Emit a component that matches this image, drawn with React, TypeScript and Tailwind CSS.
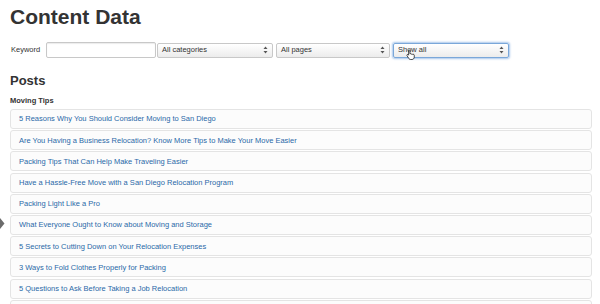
import React from 'react';

const posts = [
  '5 Reasons Why You Should Consider Moving to San Diego',
  'Are You Having a Business Relocation? Know More Tips to Make Your Move Easier',
  'Packing Tips That Can Help Make Traveling Easier',
  'Have a Hassle-Free Move with a San Diego Relocation Program',
  'Packing Light Like a Pro',
  'What Everyone Ought to Know about Moving and Storage',
  '5 Secrets to Cutting Down on Your Relocation Expenses',
  '3 Ways to Fold Clothes Properly for Packing',
  '5 Questions to Ask Before Taking a Job Relocation',
  '',
];

const Arrows = () => (
  <svg width="5" height="8" viewBox="0 0 5 8" className="shrink-0">
    <path d="M2.5 0.5 L4.5 3 L0.5 3 Z" fill="#555" />
    <path d="M2.5 7.5 L4.5 5 L0.5 5 Z" fill="#555" />
  </svg>
);

const FakeSelect = ({ label, width, focused }: { label: string; width: string; focused?: boolean }) => (
  <div
    className={`${width} h-[15px] flex items-center justify-between pl-[4px] pr-[4px] rounded-[2px] border bg-gradient-to-b from-white to-[#ececec] text-[#333] text-[7.5px] ${focused ? 'border-[#7aa7d9] shadow-[0_0_2px_1px_rgba(110,160,220,0.6)]' : 'border-[#c8c8c8]'}`}
  >
    <span>{label}</span>
    <Arrows />
  </div>
);

export default function App() {
  return (
    <div className="relative w-[600px] h-[304px] overflow-hidden bg-white px-[10px] pt-[6px]" style={{ fontFamily: '"Liberation Sans", Arial, Helvetica, sans-serif' }}>
      <h1 className="text-[21px] leading-[21px] font-bold text-[#333]">Content Data</h1>

      <div className="flex items-center mt-[15px] h-[16px]">
        <span className="text-[7.5px] text-[#333] ml-[1px] w-[35px]">Keyword</span>
        <div className="w-[110px] h-[16px] bg-white border border-[#c8c8c8] rounded-[2px] shadow-[inset_0_1px_1px_rgba(0,0,0,0.08)]" />
        <div className="ml-[1px] flex gap-[3px] items-center">
          <FakeSelect label="All categories" width="w-[116px]" />
          <FakeSelect label="All pages" width="w-[114px]" />
          <div className="relative">
            <FakeSelect label="Show all" width="w-[116px]" focused />
            <svg width="9" height="11" viewBox="0 0 18 22" className="absolute left-[13px] top-[6px]">
              <path d="M6 1.5c1 0 1.8.8 1.8 1.8v6.2l1-.2c.9 0 1.5.5 1.7 1.2.3-.4.8-.6 1.4-.6.8 0 1.4.5 1.6 1.2.3-.3.7-.5 1.2-.5 1 0 1.8.8 1.8 1.8v4c0 2.5-2 4.6-4.6 4.6H9.3c-1.4 0-2.7-.7-3.5-1.8L2 13.3c-.5-.7-.3-1.6.4-2.1.6-.4 1.4-.3 1.9.2l.9 1V3.3C5.2 2.3 5.6 1.5 6 1.5z" fill="#fff" stroke="#000" strokeWidth="1.4" strokeLinejoin="round" />
            </svg>
          </div>
        </div>
      </div>

      <h2 className="mt-[16px] text-[13px] leading-[13px] font-bold text-[#333]">Posts</h2>
      <div className="mt-[10px] text-[7.5px] leading-[8px] font-bold text-[#333]">Moving Tips</div>

      <div className="mt-[4px] flex flex-col gap-[1.2px] w-[582px]">
        {posts.map((p, i) => (
          <div key={i} className="h-[20px] shrink-0 flex items-center pl-[8px] bg-[#fcfcfc] border border-[#e4e4e4] rounded-[3px]">
            {p && <a className="text-[7.5px] text-[#2a69a8]">{p}</a>}
          </div>
        ))}
      </div>

      <svg width="5" height="11" viewBox="0 0 5 11" className="absolute left-0 top-[218px]">
        <path d="M0 0 L4.5 5.5 L0 11 Z" fill="#6b6b6b" />
      </svg>
    </div>
  );
}
